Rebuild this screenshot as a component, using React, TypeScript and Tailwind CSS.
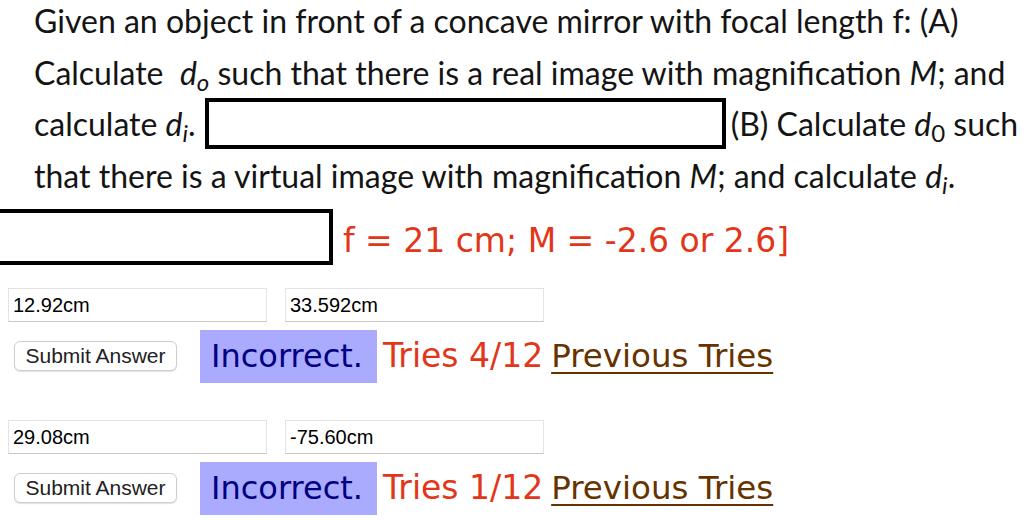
import React from "react";

function D({ sub, upright }: { sub: string; upright?: boolean }) {
  return (
    <span>
      <i>d</i>
      <sub className={upright ? "not-italic" : "italic"}>{sub}</sub>
    </span>
  );
}

function InputRow({ a, b }: { a: string; b: string }) {
  return (
    <div className="flex gap-[18px] pl-[8px]">
      <div className="w-[259px] h-[34px] border border-[#e3e3e3] border-b-[#c9c9c9] bg-white pl-[4px] flex items-center text-[20px] text-black font-['Liberation_Sans',Arial,sans-serif]">
        {a}
      </div>
      <div className="w-[259px] h-[34px] border border-[#e3e3e3] border-b-[#c9c9c9] bg-white pl-[4px] flex items-center text-[20px] text-black font-['Liberation_Sans',Arial,sans-serif]">
        {b}
      </div>
    </div>
  );
}

function ResultRow({ tries }: { tries: string }) {
  return (
    <div className="flex items-center h-[53px]">
      <button className="ml-[14px] w-[163px] h-[30px] rounded-[6px] border border-[#cfcfcf] bg-white shadow-[0_1px_1px_rgba(0,0,0,0.12)] text-[21px] text-[#222] font-['Liberation_Sans',Arial,sans-serif] flex items-center justify-center">
        Submit Answer
      </button>
      <div className="ml-[23px] w-[177px] h-[53px] bg-[#aaaaff] pl-[11px] flex items-center text-[32px] text-[#000080] font-['DejaVu_Sans',Verdana,sans-serif] whitespace-nowrap">
        Incorrect.
      </div>
      <span className="ml-[6px] text-[33px] text-[#e2361a] font-['DejaVu_Sans',Verdana,sans-serif] whitespace-nowrap">
        Tries {tries}
      </span>
      <a className="ml-[8px] text-[32.5px] text-[#663300] underline decoration-[2px] underline-offset-[5px] font-['DejaVu_Sans',Verdana,sans-serif] whitespace-nowrap">
        Previous Tries
      </a>
    </div>
  );
}

export default function App() {
  return (
    <div className="w-[1024px] h-[520px] bg-white overflow-hidden">
      <div className="pl-[34px] -mt-[5px] font-['Lato',sans-serif] text-[32px] text-[#141414] whitespace-nowrap">
        <div className="h-[51.5px] leading-[51.5px]">
          Given an object in front of a concave mirror with focal length f: (A)
        </div>
        <div className="h-[51.5px] leading-[51.5px]">
          Calculate&nbsp; <D sub="o" /> such that there is a real image with magnification <i>M</i>; and
        </div>
        <div className="h-[51.5px] leading-[51.5px] flex items-center">
          <span>
            calculate <D sub="i" />.
          </span>
          <div className="ml-[9px] w-[521px] h-[51px] border-[4px] border-black bg-white shrink-0" />
          <span className="ml-[5px]">
            (B) Calculate <D sub="0" upright /> such
          </span>
        </div>
        <div className="h-[51.5px] leading-[51.5px]">
          that there is a virtual image with magnification <i>M</i>; and calculate <D sub="i" />.
        </div>
      </div>
      <div className="flex items-center mt-[7px]">
        <div className="-ml-[6px] w-[339px] h-[56px] border-[4px] border-black bg-white shrink-0" />
        <span className="ml-[10px] pt-[8px] text-[33px] text-[#e2361a] font-['DejaVu_Sans',Verdana,sans-serif] whitespace-nowrap">
          f = 21 cm; M = -2.6 or 2.6]
        </span>
      </div>
      <div className="mt-[22px]">
        <InputRow a="12.92cm" b="33.592cm" />
      </div>
      <div className="mt-[8px]">
        <ResultRow tries="4/12" />
      </div>
      <div className="mt-[37px]">
        <InputRow a="29.08cm" b="-75.60cm" />
      </div>
      <div className="mt-[8px]">
        <ResultRow tries="1/12" />
      </div>
    </div>
  );
}
